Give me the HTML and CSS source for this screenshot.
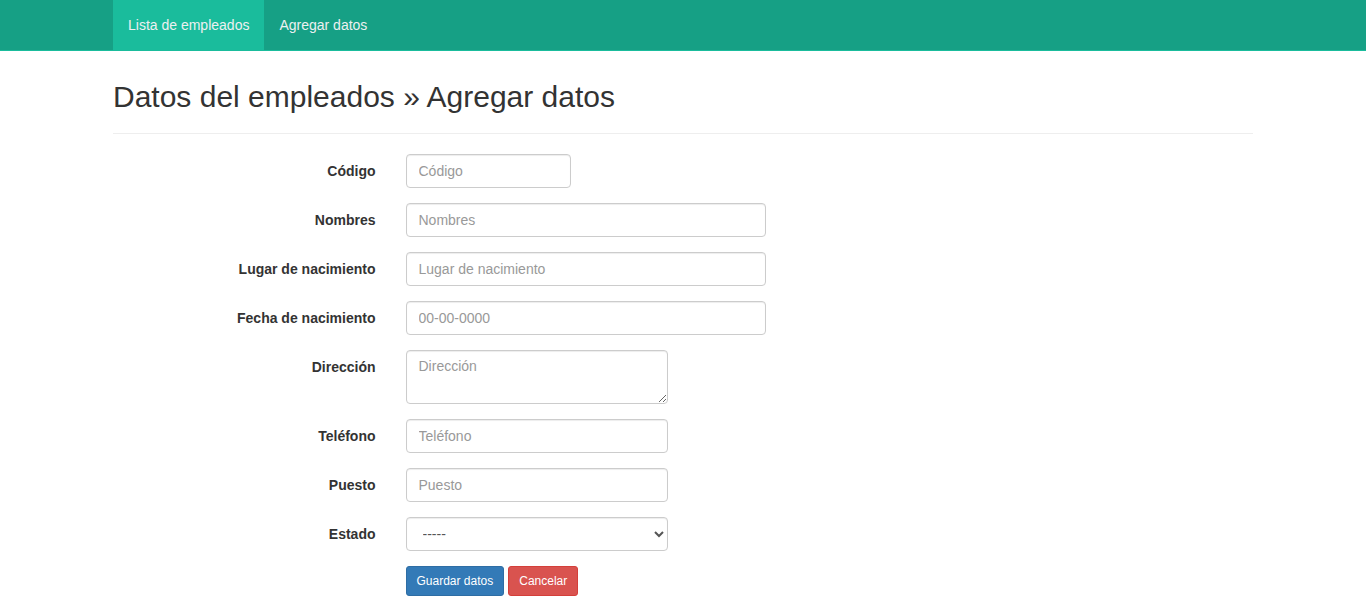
FILE: index.html
```html
<!DOCTYPE html>
<html lang="es">
<head>
<meta charset="utf-8">
<title>Agregar datos</title>
<link rel="stylesheet" href="styles.css">
</head>
<body>
<nav class="navbar">
  <div class="container nav-inner">
    <a class="nav-link active" href="#">Lista de empleados</a>
    <a class="nav-link" href="#">Agregar datos</a>
  </div>
</nav>
<main class="container">
  <div class="page-header">
    <h2>Datos del empleados &raquo; Agregar datos</h2>
  </div>
  <form class="form">
    <div class="row">
      <label class="label">Código</label>
      <div class="field w2"><input class="control" type="text" placeholder="Código"></div>
    </div>
    <div class="row">
      <label class="label">Nombres</label>
      <div class="field w4"><input class="control" type="text" placeholder="Nombres"></div>
    </div>
    <div class="row">
      <label class="label">Lugar de nacimiento</label>
      <div class="field w4"><input class="control" type="text" placeholder="Lugar de nacimiento"></div>
    </div>
    <div class="row">
      <label class="label">Fecha de nacimiento</label>
      <div class="field w4"><input class="control" type="text" placeholder="00-00-0000"></div>
    </div>
    <div class="row">
      <label class="label">Dirección</label>
      <div class="field w3"><textarea class="control area" placeholder="Dirección"></textarea></div>
    </div>
    <div class="row">
      <label class="label">Teléfono</label>
      <div class="field w3"><input class="control" type="text" placeholder="Teléfono"></div>
    </div>
    <div class="row">
      <label class="label">Puesto</label>
      <div class="field w3"><input class="control" type="text" placeholder="Puesto"></div>
    </div>
    <div class="row">
      <label class="label">Estado</label>
      <div class="field w3">
        <select class="control select">
          <option>-----</option>
          <option>Fijo</option>
          <option>Contratado</option>
        </select>
      </div>
    </div>
    <div class="row">
      <div class="label"></div>
      <div class="field buttons">
        <button type="button" class="btn btn-primary">Guardar datos</button>
        <button type="button" class="btn btn-danger">Cancelar</button>
      </div>
    </div>
  </form>
</main>
</body>
</html>
```
FILE: styles.css
```css
* { box-sizing: border-box; }
html, body { margin: 0; padding: 0; }
body {
  font-family: "Liberation Sans", Arial, Helvetica, sans-serif;
  font-size: 14px;
  line-height: 1.42857;
  color: #333;
  background: #fff;
}
.container {
  width: 1170px;
  margin: 0 auto;
  padding: 0 15px;
}
.navbar {
  background: #16a085;
  border-bottom: 1px solid #1abc9c;
  height: 51px;
}
.nav-inner {
  display: flex;
  height: 50px;
}
.nav-link {
  display: block;
  padding: 15px;
  line-height: 20px;
  color: #ecf0f1;
  text-decoration: none;
}
.nav-link.active { background: #1abc9c; }
.page-header {
  margin: 29px 0 20px;
  padding-bottom: 9px;
  border-bottom: 1px solid #eee;
}
.page-header h2 {
  margin: 0 0 11px;
  font-size: 30px;
  font-weight: 500;
  line-height: 1.1;
}
.form { display: flex; flex-direction: column; gap: 15px; }
.row { display: flex; }
.label {
  width: 292.5px;
  padding: 8px 15px 0 15px;
  margin-left: -15px;
  text-align: right;
  font-weight: bold;
}
.field { padding: 0 15px; }
.w2 { width: 195px; }
.w3 { width: 292.5px; }
.w4 { width: 390px; }
.control {
  display: block;
  width: 100%;
  height: 34px;
  padding: 6px 12px;
  font-family: inherit;
  font-size: 14px;
  line-height: 1.42857;
  color: #555;
  background: #fff;
  border: 1px solid #ccc;
  border-radius: 4px;
  box-shadow: inset 0 1px 1px rgba(0,0,0,.075);
}
.control::placeholder { color: #999; }
.area { height: 54px; resize: vertical; }
.select { padding: 6px 8px 6px 12px; }
.buttons { display: flex; gap: 4px; }
.btn {
  font-family: inherit;
  font-size: 12px;
  line-height: 1.5;
  padding: 5px 10px;
  border-radius: 3px;
  border: 1px solid transparent;
  color: #fff;
  cursor: pointer;
}
.btn-primary { background: #337ab7; border-color: #2e6da4; }
.btn-danger { background: #d9534f; border-color: #d43f3a; }
```
